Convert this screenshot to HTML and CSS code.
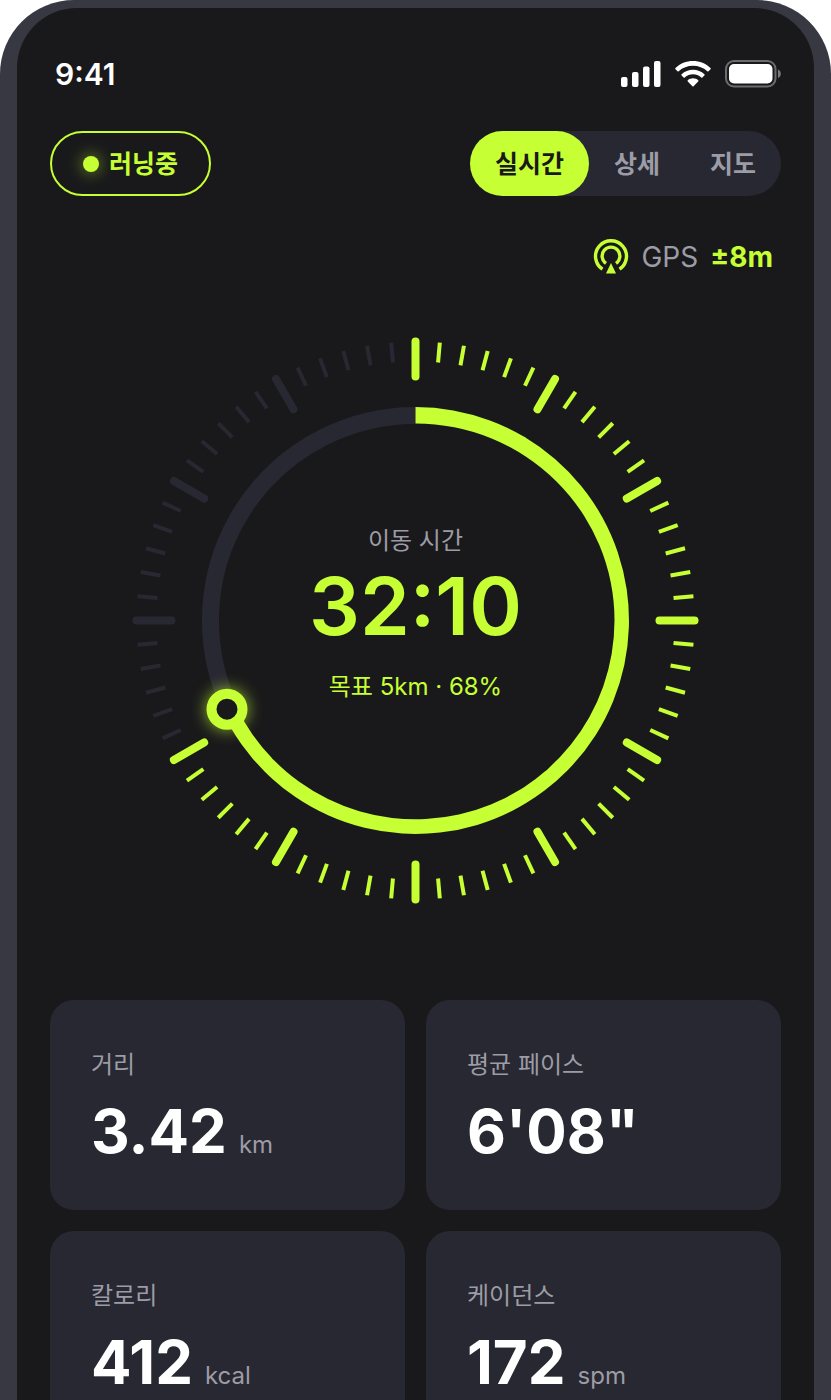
FILE: index.html
```html
<!DOCTYPE html>
<html lang="ko">
<head>
  <meta charset="UTF-8">
  <meta name="viewport" content="width=device-width, initial-scale=1.0">
  <title>러닝중</title>
  <link rel="stylesheet" href="styles.css">
</head>
<body>
  <div class="phone">
    <div class="screen">
      <div class="status-bar">
        <span class="clock">9:41</span>
        <div class="status-icons">
          <svg width="40" height="26" viewBox="0 0 40 26" fill="#fff">
            <rect x="0" y="16" width="6.5" height="10" rx="2"/>
            <rect x="11" y="11" width="6.5" height="15" rx="2"/>
            <rect x="22" y="5.5" width="6.5" height="20.5" rx="2"/>
            <rect x="33" y="0" width="6.5" height="26" rx="2"/>
          </svg>
          <svg width="36" height="26" viewBox="0 0 36 26" fill="#fff">
            <path d="M18 0C11.300 0 5 2.500.5 7q-.6.600 0 1.200l2 2q.6.600 1.200 0C7.600 6.700 12.600 4.800 18 4.800s10.400 1.900 14.300 5.400q.6.600 1.200 0l2-2q.6-.6 0-1.200C31 2.500 24.700 0 18 0z"/>
            <path d="M18 8.700c-4.300 0-8.400 1.600-11.400 4.500q-.6.600 0 1.200l2 2q.6.600 1.200 0c2.300-2 5.200-3.100 8.200-3.100s5.900 1.100 8.200 3.100q.6.600 1.200 0l2-2q.6-.6 0-1.200C26.400 10.300 22.300 8.700 18 8.700z"/>
            <path d="M18 17.300c-2 0-3.800.7-5.200 1.900q-.6.600 0 1.200l4.600 4.900q.6.600 1.200 0l4.600-4.900q.6-.6 0-1.200c-1.400-1.200-3.200-1.900-5.200-1.900z"/>
          </svg>
          <svg width="56" height="28" viewBox="0 0 56 28">
            <rect x="1" y="1" width="49.500" height="25.500" rx="8" fill="none" stroke="#6c6c6e" stroke-width="2"/>
            <rect x="4" y="4" width="43.500" height="19.500" rx="5" fill="#fff"/>
            <path d="M53 9.500c2 .9 2.800 2.500 2.800 4.300S55 17.200 53 18z" fill="#7a7a7c"/>
          </svg>
        </div>
      </div>

      <div class="toolbar">
        <div class="run-state"><span class="dot"></span><span class="run-label">러닝중</span></div>
        <div class="tabs">
          <button class="tab active">실시간</button>
          <button class="tab">상세</button>
          <button class="tab">지도</button>
        </div>
      </div>

      <div class="gps">
        <svg width="36" height="36" viewBox="-18 -18 36 36" fill="none" stroke="#c6ff33" stroke-width="3.400">
          <path d="M-8.500 12.200A15.500 15.500 0 1 1 8.500 12.200"/>
          <path d="M-5 6.400A8.900 8.900 0 1 1 5 6.400"/>
          <path d="M0 6L5 16.500H-5z" fill="#c6ff33" stroke="none"/>
        </svg>
        <span class="gps-label">GPS</span>
        <span class="gps-value">±8m</span>
      </div>

      <div class="gauge">
        <svg class="dial" viewBox="-283.5 -283.5 567 567">
          <g id="ticks"></g>
          <!-- 68% = 244.8deg -->
          <path class="track" d="M-185.500 87.300A205 205 0 0 1 0 -205"/>
          <path class="progress" d="M0 -213.500A213.500 213.500 0 1 1 -193.200 90.900L-180 84.700A199 199 0 0 0 199 0A199 197 0 0 0 0 -197z"/>
          <circle class="knob" cx="-188.500" cy="88.700" r="15.500"/>
        </svg>
        <div class="gauge-text">
          <div class="gauge-label">이동 시간</div>
          <div class="gauge-time">32:10</div>
          <div class="gauge-goal">목표 5km · 68%</div>
        </div>
      </div>

      <div class="cards">
        <div class="card">
          <div class="card-label">거리</div>
          <div class="card-value">3.42<span class="unit">km</span></div>
        </div>
        <div class="card">
          <div class="card-label">평균 페이스</div>
          <div class="card-value">6'08"</div>
        </div>
        <div class="card">
          <div class="card-label">칼로리</div>
          <div class="card-value">412<span class="unit">kcal</span></div>
        </div>
        <div class="card">
          <div class="card-label">케이던스</div>
          <div class="card-value">172<span class="unit">spm</span></div>
        </div>
      </div>
    </div>
  </div>

  <script>
    // 5도 간격 눈금, 30도마다 굵은 눈금
    const progress = 0.68;
    const ticks = document.getElementById("ticks");

    for (let deg = 0; deg < 360; deg += 5) {
      const major = deg % 30 === 0;
      const line = document.createElementNS("http://www.w3.org/2000/svg", "line");
      line.setAttribute("y1", -279);
      line.setAttribute("y2", major ? -244 : -259);
      line.setAttribute("transform", `rotate(${deg})`);
      line.setAttribute("class", "tick" + (major ? " major" : "") + (deg <= progress * 360 ? " on" : ""));
      ticks.appendChild(line);
    }
  </script>
</body>
</html>
```
FILE: styles.css
```css
* {
  box-sizing: border-box;
}

body {
  margin: 0;
  background-color: #fff;
  font-family: Inter, "Noto Sans CJK KR", sans-serif;
  color: #fff;
}

.phone {
  height: 100vh;
  padding: 8px 17px 0;
  background-color: #383842;
  border-radius: 74px 74px 0 0;
}

.screen {
  height: 100%;
  padding: 48px 33px 33px;
  background-color: #19191b;
  border-radius: 60px 60px 0 0;
  overflow-y: auto;
  scrollbar-width: none;
}

.status-bar {
  display: flex;
  justify-content: space-between;
  align-items: center;
  padding-left: 5px;
}

.clock {
  font-size: 30px;
  line-height: 36px;
  font-weight: 600;
}

.status-icons {
  display: flex;
  align-items: center;
  gap: 14px;
}

.toolbar {
  display: flex;
  justify-content: space-between;
  margin-top: 39px;
}

.run-state {
  display: flex;
  align-items: center;
  gap: 10px;
  height: 65px;
  padding: 0 31px;
  border: 2px solid #c6ff33;
  border-radius: 33px;
  font-size: 25px;
  font-weight: 600;
  color: #c6ff33;
}

.run-label {
  padding-bottom: 4px;
}

.dot {
  width: 16px;
  height: 16px;
  border-radius: 50%;
  background-color: #c6ff33;
  box-shadow: 0 0 16px rgba(198, 255, 51, 0.6);
}

.tabs {
  display: flex;
  height: 65px;
  background-color: #282832;
  border-radius: 33px;
}

.tab {
  padding: 0 25px 4px;
  border: none;
  border-radius: 33px;
  background: none;
  font-family: inherit;
  font-size: 25px;
  font-weight: 700;
  color: #9c9ca6;
  cursor: pointer;
}

.tab.active {
  background-color: #c6ff33;
  color: #19191b;
}

.gps {
  display: flex;
  justify-content: flex-end;
  align-items: center;
  margin-top: 43px;
  padding-right: 8px;
  font-size: 28px;
  line-height: 36px;
}

.gps-label {
  margin: 0 12px;
  color: #9c9ca6;
}

.gps-value {
  font-weight: 700;
  color: #c6ff33;
}

.gauge {
  display: grid;
  place-items: center;
  margin-top: 62px;
}

.dial,
.gauge-text {
  grid-area: 1 / 1;
}

.dial {
  width: 100%;
  max-width: 567px;
  overflow: visible;
}

.tick {
  stroke: #282832;
  stroke-width: 4;
}

.tick.major {
  stroke-width: 8;
  stroke-linecap: round;
}

.tick.on {
  stroke: #c6ff33;
}

.track {
  fill: none;
  stroke: #282832;
  stroke-width: 17;
}

.progress {
  fill: #c6ff33;
}

.knob {
  fill: #19191b;
  stroke: #c6ff33;
  stroke-width: 10;
  filter: drop-shadow(0 0 8px rgba(198, 255, 51, 0.7));
}

.gauge-text {
  padding-bottom: 13px;
  text-align: center;
}

.gauge-label {
  font-size: 24px;
  line-height: 36px;
  color: #9c9ca6;
}

.gauge-time {
  margin: 7px 0 23px;
  font-size: 80px;
  line-height: 80px;
  font-weight: 600;
  color: #c6ff33;
}

.gauge-goal {
  font-size: 24px;
  line-height: 36px;
  color: #c6ff33;
}

.cards {
  display: grid;
  grid-template-columns: 1fr 1fr;
  gap: 21px;
  margin-top: 96px;
}

.card {
  padding: 47px 41px 43px;
  background-color: #282832;
  border-radius: 24px;
}

.card-label {
  font-size: 24px;
  line-height: 36px;
  color: #9c9ca6;
}

.card-value {
  display: flex;
  align-items: baseline;
  gap: 12px;
  margin-top: 12px;
  font-size: 60px;
  line-height: 72px;
  font-weight: 700;
}

.unit {
  font-size: 24px;
  line-height: 36px;
  font-weight: 400;
  color: #9c9ca6;
}
```
